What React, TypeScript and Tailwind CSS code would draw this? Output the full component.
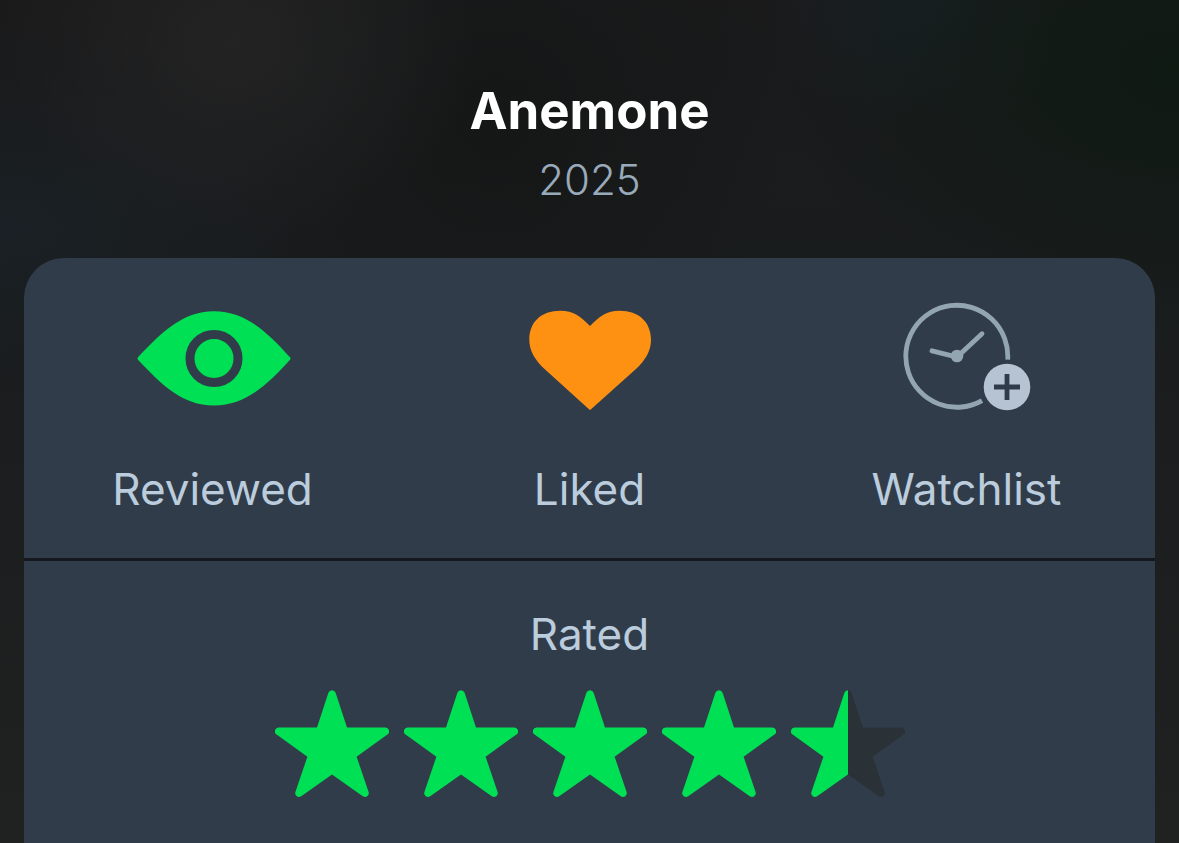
import { useState } from "react";

interface ActionProps {
  label: string;
  pressed: boolean;
  onToggle: () => void;
  children: React.ReactNode;
}

const STAR_PATH =
  "M53.4 2.8A3.8 3.8 0 0 1 60.6 2.8L72 37.5H110.2A3.8 3.8 0 0 1 112.4 44.5L81.6 66.7L93.6 101.9A3.8 3.8 0 0 1 87.8 106.2L57 84.6L26.2 106.2A3.8 3.8 0 0 1 20.4 101.9L32.4 66.7L1.6 44.5A3.8 3.8 0 0 1 3.8 37.5H42Z";

function EyeIcon() {
  return (
    <svg viewBox="0 0 160 112" className="h-28 w-40" aria-hidden="true">
      <path
        d="M5.2 55C28 31 49 9.2 81 9.2C113 9.2 135 31 156.8 55Q158.2 56.5 156.8 58C135 82 113 103.6 81 103.6C49 103.6 28 82 5.2 58Q3.8 56.5 5.2 55Z"
        fill="#00e054"
      />
      <circle
        cx="81"
        cy="56.5"
        r="24"
        fill="none"
        stroke="#313c4a"
        strokeWidth="9"
      />
    </svg>
  );
}

function HeartIcon() {
  return (
    <svg viewBox="0 0 160 112" className="h-28 w-40" aria-hidden="true">
      <path
        d="M80 24C71 14.5 63 8.7 50.5 8.7C31 8.7 19.3 20 19.3 38C19.3 49 25.5 58.5 34 66.5L79 107.2Q80 108.2 81 107.2L126.5 66.5C135 58.5 141 49 141 38C141 20 129 8.7 109.5 8.7C97 8.7 89 14.5 80 24Z"
        fill="#ff9112"
      />
    </svg>
  );
}

function WatchlistIcon() {
  return (
    <svg viewBox="0 0 160 112" className="h-28 w-40" aria-hidden="true">
      <g fill="none" stroke="#93a5b1" strokeWidth="4.8">
        <path d="M120.7 57.6A51 51 0 1 0 95 98.6" />
        <path d="M45 48.8L70 55L95 31.7" strokeLinecap="round" />
      </g>
      <circle cx="70" cy="54" r="6.3" fill="#93a5b1" />
      <circle cx="120" cy="85" r="23.3" fill="#b5c3d2" />
      <path
        d="M120 72V98M107 85H133"
        stroke="#313c4a"
        strokeWidth="4.8"
      />
    </svg>
  );
}

function Star({ fill }: { fill: number }) {
  return (
    <svg viewBox="0 0 114 108" className="h-[108px] w-[114px]" aria-hidden="true">
      <defs>
        <clipPath id="left-half">
          <rect width="57" height="108" />
        </clipPath>
      </defs>
      {fill < 1 && <path d={STAR_PATH} fill="#2a3238" />}
      {fill > 0 && (
        <path
          d={STAR_PATH}
          fill="#00e054"
          clipPath={fill < 1 ? "url(#left-half)" : undefined}
        />
      )}
    </svg>
  );
}

function Action({ label, pressed, onToggle, children }: ActionProps) {
  return (
    <button
      type="button"
      aria-pressed={pressed}
      onClick={onToggle}
      className="flex flex-col items-center gap-12 pt-11 pb-[42px]"
    >
      {children}
      <span className="text-[44px] leading-[54px] font-normal">{label}</span>
    </button>
  );
}

export default function App() {
  const [reviewed, setReviewed] = useState(true);
  const [liked, setLiked] = useState(true);
  const [watchlist, setWatchlist] = useState(false);
  const [rating, setRating] = useState(4.5);

  return (
    <main className="flex min-h-screen flex-col bg-[#191b1c] bg-[radial-gradient(ellipse_at_20%_5%,#232324_0%,transparent_18%),radial-gradient(ellipse_at_100%_8%,#0f1a13_0%,transparent_24%),radial-gradient(ellipse_at_78%_0%,#192025_0%,transparent_12%),radial-gradient(ellipse_at_0%_27%,#1a2025_0%,transparent_18%),radial-gradient(ellipse_at_42%_14%,#151717_0%,transparent_30%),linear-gradient(#1a1a1b,#191c1d_30%,#202121)] px-6 font-['Inter',sans-serif]">
      <header className="flex flex-col items-center gap-3.5 pt-[81px] pb-[53px]">
        <h1 className="text-[51px] leading-[60px] font-bold text-white">
          Anemone
        </h1>
        <p className="text-[42px] leading-[50px] font-light text-[#99aabb]">
          2025
        </p>
      </header>

      <div className="flex flex-1 flex-col divide-y-3 divide-[#15191f] rounded-t-[40px] bg-[#313c4a] text-[#bbccdd]">
        <section className="grid grid-cols-3">
          <Action
            label="Reviewed"
            pressed={reviewed}
            onToggle={() => setReviewed(!reviewed)}
          >
            <EyeIcon />
          </Action>
          <Action
            label="Liked"
            pressed={liked}
            onToggle={() => setLiked(!liked)}
          >
            <HeartIcon />
          </Action>
          <Action
            label="Watchlist"
            pressed={watchlist}
            onToggle={() => setWatchlist(!watchlist)}
          >
            <WatchlistIcon />
          </Action>
        </section>

        <section className="flex flex-col items-center gap-[29px] pt-[46px] pb-11">
          <h2 className="text-[44px] leading-[54px] font-normal">Rated</h2>
          <div className="flex gap-[15px]">
            {[1, 2, 3, 4, 5].map((value) => (
              <button
                key={value}
                type="button"
                aria-label={`Rate ${value}`}
                onClick={() => setRating(value)}
              >
                <Star fill={Math.min(1, Math.max(0, rating - value + 1))} />
              </button>
            ))}
          </div>
        </section>
      </div>
    </main>
  );
}
